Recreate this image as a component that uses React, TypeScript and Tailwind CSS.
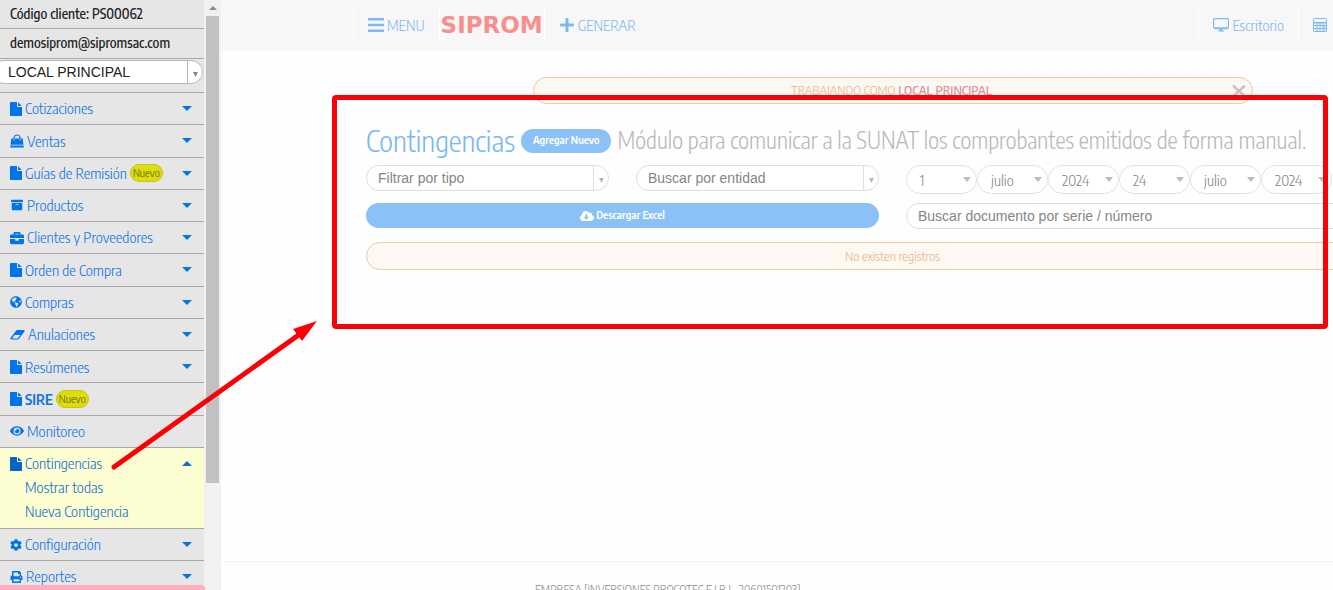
import React from "react";
import { IconType } from "react-icons";
import {
  FaArchive,
  FaBars,
  FaBriefcase,
  FaCloudDownloadAlt,
  FaCog,
  FaEye,
  FaGlobeAmericas,
  FaPlus,
  FaPrint,
} from "react-icons/fa";

type IconProps = { className?: string };

const FileIcon = ({ className }: IconProps) => (
  <svg className={className} viewBox="0 0 1536 1792" fill="currentColor" aria-hidden="true">
    <path d="M1024 512v-472q22 14 36 28l408 408q14 14 28 36h-472zm-128 32q0 40 28 68t68 28h544v1056q0 40-28 68t-68 28h-1344q-40 0-68-28t-28-68v-1600q0-40 28-68t68-28h800v544z" />
  </svg>
);

const BagIcon = ({ className }: IconProps) => (
  <svg className={className} viewBox="0 0 14 14" fill="none" aria-hidden="true">
    <path d="M4 6V4a3 3 0 0 1 6 0v2" stroke="currentColor" strokeWidth="1.2" />
    <path d="M1.3 4.6h11.4l.8 6.2H.5z" fill="currentColor" />
    <path d="M.4 11.5h13.2l.3 2H.1z" fill="currentColor" />
    <path d="M4 5v1.4M10 5v1.4" stroke="#e6e6e6" strokeWidth="1" />
  </svg>
);

const EraserIcon = ({ className }: IconProps) => (
  <svg className={className} viewBox="0 0 15 12" fill="currentColor" aria-hidden="true">
    <path
      fillRule="evenodd"
      d="M6.300 1.300Q6.700 1 7.200 1H13.800Q15 1 14.600 2.200L9 9.800Q8.400 10.500 7.700 10.500H1.100Q0 10.400.500 9.100zM7.600 9.400L10.200 6H4.600L2 9.400z"
    />
  </svg>
);

const DesktopIcon = ({ className }: IconProps) => (
  <svg className={className} viewBox="0 0 16 14" fill="none" stroke="currentColor" aria-hidden="true">
    <rect x="0.6" y="0.6" width="14.8" height="9.6" rx="1" strokeWidth="1.2" />
    <path d="M1 10.4h14" strokeWidth="1.6" />
    <path d="M6.500 11h3v1.500h1.500v1h-6v-1h1.500z" fill="currentColor" stroke="none" />
  </svg>
);

const CalculatorIcon = ({ className }: IconProps) => (
  <svg className={className} viewBox="0 0 14 14" fill="none" stroke="currentColor" aria-hidden="true">
    <rect x="0.5" y="0.5" width="13" height="13" rx="1" />
    <path d="M1 4.500h12M1 7.500h12M1 10.500h12M4 4.500v9M7 4.500v9M10 4.500v9" />
    <path d="M1 5.500h12" strokeOpacity="0.4" />
    <path d="M10 7h3v6.500h-3z" fill="currentColor" fillOpacity="0.4" stroke="none" />
  </svg>
);

interface MenuItem {
  label: string;
  icon: IconType | React.FC<IconProps>;
  iconClass: string;
  caret?: boolean;
  isNew?: boolean;
  bold?: boolean;
}

const mainItems: MenuItem[] = [
  { label: "Cotizaciones", icon: FileIcon, iconClass: "w-3 h-3.5", caret: true },
  { label: "Ventas", icon: BagIcon, iconClass: "w-3.5 h-3.5", caret: true },
  { label: "Guías de Remisión", icon: FileIcon, iconClass: "w-3 h-3.5", caret: true, isNew: true },
  { label: "Productos", icon: FaArchive, iconClass: "w-3.5 h-3", caret: true },
  { label: "Clientes y Proveedores", icon: FaBriefcase, iconClass: "w-3.5 h-3.5", caret: true },
  { label: "Orden de Compra", icon: FileIcon, iconClass: "w-3 h-3.5", caret: true },
  { label: "Compras", icon: FaGlobeAmericas, iconClass: "w-3 h-3", caret: true },
  { label: "Anulaciones", icon: EraserIcon, iconClass: "w-[15px] h-3", caret: true },
  { label: "Resúmenes", icon: FileIcon, iconClass: "w-3 h-3.5", caret: true },
  { label: "SIRE", icon: FileIcon, iconClass: "w-3 h-3.5", isNew: true, bold: true },
  { label: "Monitoreo", icon: FaEye, iconClass: "w-3.5 h-3.5" },
];

const bottomItems: MenuItem[] = [
  { label: "Configuración", icon: FaCog, iconClass: "w-3 h-3", caret: true },
  { label: "Reportes", icon: FaPrint, iconClass: "w-[13px] h-3", caret: true },
];

const Caret = ({ up }: { up?: boolean }) => (
  <svg
    className={up ? "w-2.5 h-[5px] rotate-180" : "w-2.5 h-[5px]"}
    viewBox="0 0 10 5"
    fill="currentColor"
    aria-hidden="true"
  >
    <path d="M0 0h10L5 5z" />
  </svg>
);

const SelectArrow = () => (
  <svg className="mt-1 h-[5px] w-[5px]" viewBox="0 0 5 5" fill="currentColor" aria-hidden="true">
    <path d="M0 0h5L2.500 5z" />
  </svg>
);

const MenuLink = ({ item }: { item: MenuItem }) => {
  const Icon = item.icon;
  return (
    <a href="#" className="flex h-full items-center whitespace-nowrap pl-2.5 pr-3 text-[#0b74e5]">
      <Icon className={`${item.iconClass} shrink-0 text-[#0075eb]`} />
      <span className={item.bold ? "ml-[3px] font-semibold" : "ml-[3px]"}>{item.label}</span>
      {item.isNew && (
        <span className="ml-[3px] rounded-full border border-[#c9c316] bg-[#dedd0c] px-0.5 text-[11px] leading-4 text-[#55541c]">
          Nuevo
        </span>
      )}
      {item.caret && (
        <span className="ml-auto">
          <Caret />
        </span>
      )}
    </a>
  );
};

const Sidebar = () => (
  <aside className="flex h-full shrink-0 overflow-hidden">
    <div className="relative w-[204px] bg-[#e6e6e6] text-[15px]">
      <p className="h-[29px] border-b border-[#a8a8a8] pl-2.5 text-sm font-medium leading-7 text-[#222]">
        Código cliente: PS00062
      </p>
      <p className="h-[30px] border-b border-[#a8a8a8] pl-2.5 text-sm font-medium leading-7 text-[#222]">
        demosiprom@sipromsac.com
      </p>
      <div className="h-[34px] border-b border-[#a8a8a8] pt-px">
        <div className="relative -ml-2 mr-px">
          <select
            aria-label="Local"
            className="h-6 w-full appearance-none rounded-full border border-[#b8b8b8] bg-white pl-[15px] font-['Liberation_Sans'] text-sm text-[#222]"
          >
            <option>LOCAL PRINCIPAL</option>
          </select>
          <span className="pointer-events-none absolute inset-y-px right-0 flex w-4 items-center justify-center border-l border-[#b8b8b8] text-[#888]">
            <SelectArrow />
          </span>
        </div>
      </div>

      <ul className="grid h-[355px] auto-rows-fr">
        {mainItems.map((item) => (
          <li key={item.label} className="border-b border-[#a8a8a8]">
            <MenuLink item={item} />
          </li>
        ))}
      </ul>

      <div className="h-[81px] border-b border-[#a8a8a8] bg-[#fdfdd2] text-[#0f6fce]">
        <a href="#" className="flex h-[31px] items-center pl-2.5 pr-3">
          <FileIcon className="h-3.5 w-3 text-[#0565c8]" />
          <span className="ml-[3px]">Contingencias</span>
          <span className="ml-auto">
            <Caret up />
          </span>
        </a>
        <a href="#" className="block pl-[25px] leading-4">
          Mostrar todas
        </a>
        <a href="#" className="mt-2 block pl-[25px] leading-4">
          Nueva Contigencia
        </a>
      </div>

      <ul>
        {bottomItems.map((item) => (
          <li key={item.label} className="h-8 border-b border-[#a8a8a8]">
            <MenuLink item={item} />
          </li>
        ))}
      </ul>
      <div className="absolute -right-px bottom-0 left-0 h-[5px] rounded-tr bg-[#ffafbe]" />
    </div>

    {/* Scrollbar */}
    <div className="flex w-[17px] flex-col items-center bg-[#f1f1f1]">
      <div className="flex h-4 items-center">
        <svg className="h-1 w-2" viewBox="0 0 8 4" fill="#8b8b8b" aria-hidden="true">
          <path d="M0 4h8L4 0z" />
        </svg>
      </div>
      <div className="h-[467px] w-[13px] bg-[#c1c1c1]" />
    </div>
  </aside>
);

const Header = () => (
  <header className="flex h-[50px] items-center bg-[#f7f7f7] pl-[132px] text-[15px] text-[#7fb8f2]">
    <button className="flex h-9 items-center gap-[3px] border-l border-white pl-3.5 pr-3.5">
      <FaBars className="h-5 w-4" />
      MENU
    </button>
    <a
      href="#"
      className="flex h-9 items-center border-x border-white px-px font-['DejaVu_Sans'] text-[23px] font-bold text-[#f88f8f]"
    >
      SIPROM
    </a>
    <button className="flex h-9 items-center gap-[3px] pl-3.5">
      <FaPlus className="h-4 w-4" />
      GENERAR
    </button>
    <a href="#" className="ml-auto flex h-9 items-center gap-[3px] border-l border-white px-3.5">
      <DesktopIcon className="h-3.5 w-4" />
      Escritorio
    </a>
    <a
      href="#"
      aria-label="Calculadora"
      className="flex h-9 items-center border-l border-white pl-3.5 pr-1.5"
    >
      <CalculatorIcon className="h-3.5 w-3.5" />
    </a>
  </header>
);

const FilterSelect = ({ label }: { label: string }) => (
  <div className="relative">
    <select
      aria-label={label}
      className="h-[26px] w-full appearance-none rounded-full border border-[#dedede] bg-white pl-[11px] font-['Liberation_Sans'] text-sm text-[#858585]"
    >
      <option>{label}</option>
    </select>
    <span className="pointer-events-none absolute inset-y-px right-0 flex w-4 items-center justify-center border-l border-[#dedede] text-[#b8b8b8]">
      <SelectArrow />
    </span>
  </div>
);

const dateParts = [
  { name: "Día desde", value: "1" },
  { name: "Mes desde", value: "julio" },
  { name: "Año desde", value: "2024" },
  { name: "Día hasta", value: "24" },
  { name: "Mes hasta", value: "julio" },
  { name: "Año hasta", value: "2024" },
];

const DateSelect = ({ name, value }: { name: string; value: string }) => (
  <div className="relative w-[71px]">
    <select
      aria-label={name}
      className="h-[29px] w-full appearance-none rounded-full border border-[#e2e2e2] bg-white pl-[13px] pt-0.5 text-[15px] text-[#858585]"
    >
      <option>{value}</option>
    </select>
    <svg
      className="pointer-events-none absolute right-1.5 top-3 h-[5px] w-2"
      viewBox="0 0 8 5"
      fill="#bdbdbd"
      aria-hidden="true"
    >
      <path d="M0 0h8L4 5z" />
    </svg>
  </div>
);

const Contingencias = () => (
  <section className="min-w-[1053px]">
    <h1 className="flex h-[61px] items-center whitespace-nowrap pt-3 text-[29px] font-light text-[#7ab7f6]">
      Contingencias
      <button className="ml-1.5 h-6 rounded-full bg-[#8cc1f7] px-3 text-[11px] font-semibold text-white">
        Agregar Nuevo
      </button>
      <small className="ml-1.5 text-[23px] text-[#b8b8b8]">
        Módulo para comunicar a la SUNAT los comprobantes emitidos de forma manual.
      </small>
    </h1>
    <div className="grid grid-cols-2 gap-x-[27px]">
      <div>
        <div className="grid grid-cols-2 gap-x-[27px]">
          <FilterSelect label="Filtrar por tipo" />
          <FilterSelect label="Buscar por entidad" />
        </div>
        <button className="mt-3 flex h-[25px] w-full items-center justify-center gap-0.5 rounded-full bg-[#8cc1f7] text-[11px] font-semibold text-white">
          <FaCloudDownloadAlt className="h-3 w-3.5" />
          Descargar Excel
        </button>
      </div>
      <div>
        <div className="flex">
          {dateParts.map((part) => (
            <DateSelect key={part.name} {...part} />
          ))}
        </div>
        <input
          type="text"
          aria-label="Buscar documento"
          placeholder="Buscar documento por serie / número"
          className="mt-[9px] h-[26px] w-full rounded-full border border-[#dedede] bg-white px-[11px] font-['Liberation_Sans'] text-sm placeholder:text-[#858585]"
        />
      </div>
    </div>
    <p className="mt-[13px] h-7 rounded-full border border-[#efc99a] bg-[#fdf8f2] text-center text-[13px] leading-[26px] text-[#e9b489]">
      No existen registros
    </p>
  </section>
);

// Red frame and arrow drawn over the page
const Annotations = () => (
  <div className="pointer-events-none absolute inset-0">
    <div className="absolute left-[332px] right-[5px] top-[95px] h-[234px] rounded border-[5px] border-[#fb0007]" />
    <svg
      className="absolute left-[105px] top-[315px] h-[160px] w-[220px]"
      viewBox="105 315 220 160"
      aria-hidden="true"
    >
      <path d="M114 467L300 334" stroke="#fb0007" strokeWidth="5" strokeLinecap="round" />
      <path d="M317 321L293 329L302 341z" fill="#fb0007" />
    </svg>
  </div>
);

export default function App() {
  return (
    <div className="relative flex h-screen overflow-hidden bg-[#fefefe] font-['Encode_Sans_Condensed','Roboto_Condensed','Lato',sans-serif] font-light">
      <Sidebar />
      <div className="flex min-w-0 flex-1 flex-col">
        <Header />
        <main className="flex-1 overflow-hidden pl-[145px] pt-[27px]">
          <div className="flex w-[1053px] justify-center">
            <div className="flex h-[27px] w-[720px] items-center rounded-full border border-[#efc99a] bg-[#fdf8f2] pl-[18px] pr-1.5 text-[13px] text-[#e9b489]">
              <p className="flex-1 text-center">
                TRABAJANDO COMO <b className="font-medium text-[#d493a0]">LOCAL PRINCIPAL</b>
              </p>
              <button aria-label="Cerrar" className="text-[#c3c3c3]">
                <svg className="h-3 w-3.5" viewBox="0 0 14 12" aria-hidden="true">
                  <path d="M1 0.500L13 11.500M13 0.500L1 11.500" stroke="currentColor" strokeWidth="2.500" />
                </svg>
              </button>
            </div>
          </div>
          <Contingencias />
        </main>
        <footer className="h-[29px] overflow-hidden border-t border-[#f5f5f5] pl-[314px] pt-5 text-xs leading-4 text-[#8a8a8a]">
          EMPRESA [INVERSIONES PROCOTEC E.I.R.L. 20601501203]
        </footer>
      </div>
      <Annotations />
    </div>
  );
}
